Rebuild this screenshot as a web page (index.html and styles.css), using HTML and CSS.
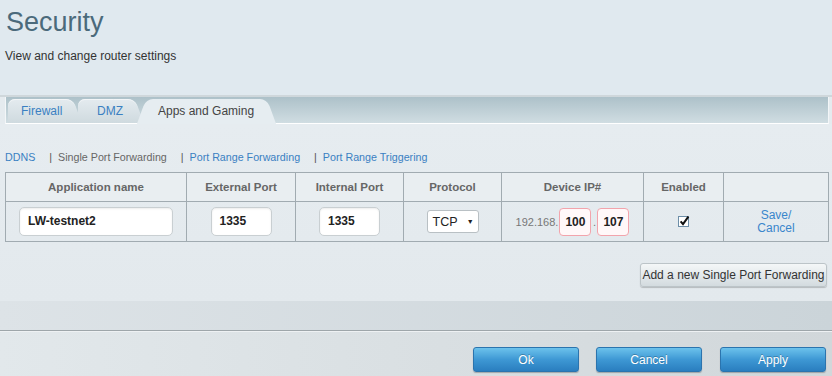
FILE: index.html
```html
<html>
<head>
  <link rel="stylesheet" href="styles.css">
</head>
<body>
  <div class="page">
    <div class="header">
      <h1 class="title">Security</h1>
      <p class="subtitle">View and change router settings</p>
    </div>

    <div class="tabs">
      <a class="tab tab-firewall">Firewall</a>
      <a class="tab tab-dmz">DMZ</a>
      <a class="tab tab-active">Apps and Gaming</a>
    </div>

    <div class="content">
      <div class="subnav">
        <a class="subnav-link">DDNS</a>
        <span class="subnav-sep">|</span>
        <span class="subnav-current">Single Port Forwarding</span>
        <span class="subnav-sep">|</span>
        <a class="subnav-link">Port Range Forwarding</a>
        <span class="subnav-sep">|</span>
        <a class="subnav-link">Port Range Triggering</a>
      </div>

      <table class="rules">
        <colgroup>
          <col class="col-name">
          <col class="col-ext">
          <col class="col-int">
          <col class="col-proto">
          <col class="col-ip">
          <col class="col-enabled">
          <col class="col-action">
        </colgroup>
        <tr class="rules-head">
          <th>Application name</th>
          <th>External Port</th>
          <th>Internal Port</th>
          <th>Protocol</th>
          <th>Device IP#</th>
          <th>Enabled</th>
          <th></th>
        </tr>
        <tr class="rules-row">
          <td><div class="field field-name">LW-testnet2</div></td>
          <td><div class="field field-port">1335</div></td>
          <td><div class="field field-port">1335</div></td>
          <td>
            <div class="select">TCP <span class="select-arrow">&#9660;</span></div>
          </td>
          <td>
            <div class="ip">
              <span class="ip-prefix">192.168.</span>
              <div class="field field-octet">100</div>
              <span class="ip-dot">.</span>
              <div class="field field-octet">107</div>
            </div>
          </td>
          <td>
            <svg class="checkbox" width="14" height="14" viewBox="0 0 14 14">
              <rect x="1.5" y="2.5" width="10" height="10" fill="#fff" stroke="#6d8ea8"/>
              <path d="M3.6 7.4 L6 10.2 L11.4 2.6" fill="none" stroke="#111" stroke-width="2"/>
            </svg>
          </td>
          <td><a class="action-link">Save/<br>Cancel</a></td>
        </tr>
      </table>

      <div class="add-row">
        <button class="btn-light">Add a new Single Port Forwarding</button>
      </div>
    </div>

    <div class="band"></div>

    <div class="footer">
      <button class="btn-blue">Ok</button>
      <button class="btn-blue">Cancel</button>
      <button class="btn-blue">Apply</button>
    </div>
  </div>
</body>
</html>
```

FILE: styles.css
```css
* {
  box-sizing: border-box;
  margin: 0;
  padding: 0;
}

body {
  font-family: "Liberation Sans", Arial, sans-serif;
  background-color: #e5ebef;
  width: 832px;
  height: 376px;
  overflow: hidden;
}

.header {
  height: 97px;
  padding: 6px 6px 0 6px;
  background-color: #e0e9ef;
  border-bottom: 2px solid #cfd7db;
}

.title {
  font-size: 27px;
  line-height: 32px;
  font-weight: normal;
  color: #4b6a7b;
}

.subtitle {
  margin-top: 11px;
  margin-left: -1px;
  font-size: 12px;
  line-height: 14px;
  color: #333;
}

/* tab strip */
.tabs {
  display: flex;
  align-items: flex-end;
  height: 27px;
  margin: 0 3px 0 5px;
  padding-left: 2px;
  background: linear-gradient(to bottom, #adc1c9, #d0dde2);
  border-left: 1px solid #f3f6f8;
  border-right: 1px solid #f3f6f8;
  border-bottom: 1px solid #fff;
}

.tab {
  position: relative;
  z-index: 0;
  height: 24px;
  line-height: 24px;
  font-size: 12px;
  color: #3a80c2;
}

.tab::before,
.tab::after {
  content: '';
  position: absolute;
  top: 0;
  bottom: 0;
  z-index: -1;
  background: linear-gradient(to bottom, #e4ebef, #cfdadf);
  box-shadow: inset 0 1px 0 #f2f5f7;
}

.tab::before {
  left: 0;
  right: 10px;
  border-radius: 7px 0 0 0;
}

.tab::after {
  right: 0;
  width: 22px;
  border-radius: 0 7px 0 0;
  transform: skewX(20deg);
  transform-origin: top;
}

.tab-firewall {
  width: 65px;
  padding-left: 13px;
}

.tab-dmz {
  width: 57px;
  margin-left: 5px;
  padding-left: 19px;
}

.tab-active {
  width: 121px;
  height: 25px;
  margin-left: 11px;
  margin-bottom: -1px;
  padding-left: 12px;
  line-height: 24px;
  color: #444;
}

.tab-active::before,
.tab-active::after {
  background: #e6edf1;
  box-shadow: none;
}

.tab-active::before {
  right: auto;
  width: 60%;
  transform: skewX(-20deg);
  transform-origin: top;
}

.tab-active::after {
  width: 60%;
}

/* content */
.content {
  height: 177px;
  padding: 26px 4px 0 5px;
  background: linear-gradient(to bottom, #e6ecf0, #e3e9ed);
}

.subnav {
  display: flex;
  align-items: center;
  height: 14px;
  font-size: 10.7px;
}

.subnav-link {
  color: #3a80c2;
}

.subnav-current {
  color: #666;
}

.subnav-sep {
  margin: 0 6px 0 14px;
  color: #555;
}

.rules {
  width: 100%;
  margin-top: 8px;
  border-collapse: collapse;
  border: 1px solid #a1abb1;
  table-layout: fixed;
}

.col-name { width: 181px; }
.col-ext { width: 109px; }
.col-int { width: 108px; }
.col-proto { width: 98px; }
.col-ip { width: 142px; }
.col-enabled { width: 80px; }
.col-action { width: 105px; }

.rules th,
.rules td {
  border: 1px solid #a1abb1;
  text-align: center;
  vertical-align: middle;
}

.rules-head th {
  height: 29px;
  font-size: 11.5px;
  font-weight: bold;
  color: #666;
  background-color: #e9eef1;
}

.rules-row td {
  height: 40px;
}

.field {
  display: inline-block;
  height: 29px;
  line-height: 27px;
  padding-left: 8px;
  text-align: left;
  font-size: 12px;
  font-weight: bold;
  color: #222;
  background-color: #fff;
  border: 1px solid #c9cfd2;
  border-radius: 5px;
  box-shadow: inset 0 1px 2px rgba(0, 0, 0, 0.08);
  vertical-align: middle;
}

.field-name {
  width: 154px;
}

.field-port {
  width: 61px;
}

.select {
  display: inline-block;
  width: 52px;
  height: 23px;
  line-height: 21px;
  padding-left: 5px;
  text-align: left;
  font-size: 12.5px;
  color: #222;
  background-color: #fff;
  border: 1px solid #b9c0c4;
  border-radius: 3px;
  vertical-align: middle;
}

.select-arrow {
  margin-left: 6px;
  font-size: 7px;
  vertical-align: 2px;
}

.ip {
  display: flex;
  align-items: center;
  justify-content: center;
}

.ip-prefix {
  font-size: 11px;
  color: #777;
}

.field-octet {
  width: 32px;
  height: 28px;
  line-height: 26px;
  padding-left: 0;
  text-align: center;
  border-color: #f2a4ac;
  background-color: #fff8f9;
  border-radius: 4px;
  box-shadow: none;
}

.ip-prefix + .field-octet {
  margin-left: 1px;
}

.ip-dot {
  width: 6px;
  font-size: 11px;
  color: #777;
  text-align: center;
}

.checkbox {
  display: inline-block;
  vertical-align: middle;
  margin-top: -2px;
}

.action-link {
  display: inline-block;
  font-size: 12px;
  line-height: 13px;
  color: #3a86cc;
}

.add-row {
  margin-top: 21px;
  text-align: right;
  padding-right: 1px;
}

.btn-light {
  width: 187px;
  height: 24px;
  font-family: "Liberation Sans", Arial, sans-serif;
  font-size: 12px;
  color: #333;
  background: linear-gradient(to bottom, #f4f7f8, #d3dbdf);
  border: 1px solid #bcc4c8;
  border-radius: 3px;
  box-shadow: 0 1px 1px rgba(0, 0, 0, 0.2);
}

/* bottom band and footer */
.band {
  height: 30px;
  background: linear-gradient(to right, #dde3e7, #cbd4d9);
  border-bottom: 1px solid #9ea6aa;
}

.footer {
  display: flex;
  justify-content: flex-end;
  gap: 17px;
  height: 45px;
  padding: 15px 6px 0 0;
  background: linear-gradient(to right, #e2e8eb, #d1d7da);
  border-top: 1px solid #eef1f3;
}

.btn-blue {
  width: 106px;
  height: 25px;
  font-family: "Liberation Sans", Arial, sans-serif;
  font-size: 12px;
  color: #fff;
  text-shadow: 0 -1px 0 rgba(0, 0, 0, 0.25);
  background: linear-gradient(to bottom, #6cc2ec, #3e98d4 50%, #2a7ebf);
  border: 1px solid #2b74ae;
  border-radius: 3px;
  box-shadow: 0 1px 1px rgba(0, 0, 0, 0.25);
}

.btn-blue:last-child {
  margin-left: 1px;
}
```
